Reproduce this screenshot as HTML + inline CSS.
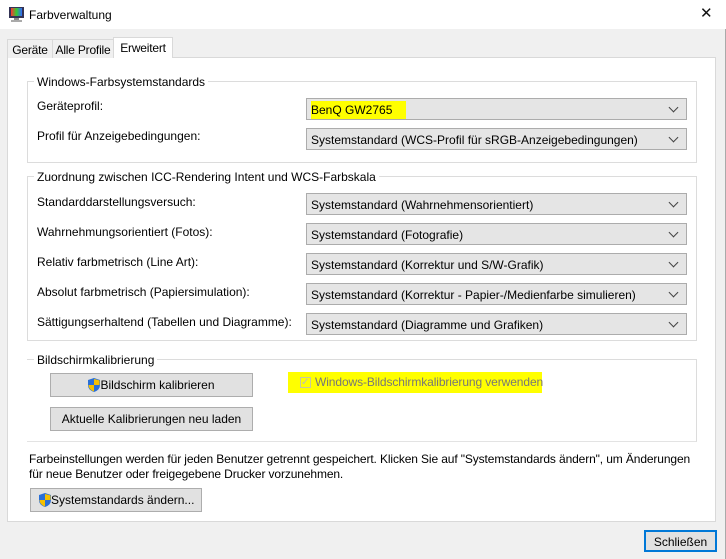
<!DOCTYPE html>
<html><head><meta charset="utf-8"><style>
*{box-sizing:border-box;margin:0;padding:0}
body{width:726px;height:559px;background:#f0f0f0;font-family:"Liberation Sans",sans-serif;font-size:12px;color:#000;position:relative;overflow:hidden}
.a{position:absolute}
.title{left:0;top:0;width:726px;height:29px;background:#fff}
.panel{left:7px;top:57px;width:709px;height:465px;background:#fff;border:1px solid #d9d9d9}
.tab{top:39px;height:19px;border:1px solid #d9d9d9;border-bottom:none;background:#f0f0f0;padding:3px 0 0;text-align:center;white-space:nowrap;letter-spacing:-0.2px}
.grp{border:1px solid #dcdcdc}
.leg{background:#fff;padding:0 3px;white-space:nowrap}
.cb{left:306px;width:381px;height:22px;background:#e5e5e5;border:1px solid #acacac;padding:4px 0 0 4px;white-space:nowrap}
.cb:after{content:"";position:absolute;right:9px;top:5px;width:6px;height:6px;border-right:1px solid #444;border-bottom:1px solid #444;transform:rotate(45deg)}
.btn{background:#e1e1e1;border:1px solid #adadad;text-align:center;padding-top:4px;white-space:nowrap}
.lbl{left:37px;white-space:nowrap}
</style></head><body>
<div class="a title"></div>
<svg class="a" style="left:8px;top:6px" width="17" height="16"><rect x="1" y="1" width="15" height="11" fill="#335" /><rect x="3" y="2" width="11" height="8" fill="url(#g)"/><defs><linearGradient id="g"><stop offset="0" stop-color="#f33"/><stop offset=".5" stop-color="#3c3"/><stop offset="1" stop-color="#36f"/></linearGradient></defs><rect x="6" y="12" width="5" height="2" fill="#888"/><rect x="3" y="14" width="11" height="2" fill="#aaa"/></svg>
<div class="a" style="left:29px;top:8px;font-size:12px">Farbverwaltung</div>
<div class="a" style="left:700px;top:4px;font-size:15px;color:#111">✕</div>
<div class="a" style="left:725px;top:29px;width:1px;height:530px;background:#aaa"></div>
<div class="a panel"></div>
<div class="a tab" style="left:7px;width:46px">Geräte</div>
<div class="a tab" style="left:52px;width:62px">Alle Profile</div>
<div class="a tab" style="left:113px;top:37px;height:21px;width:60px;background:#fff;padding-top:3px">Erweitert</div>

<div class="a grp" style="left:27px;top:81px;width:670px;height:82px"></div>
<div class="a leg" style="left:34px;top:75px">Windows-Farbsystemstandards</div>
<div class="a lbl" style="top:99px">Geräteprofil:</div>
<div class="a lbl" style="top:129px">Profil für Anzeigebedingungen:</div>
<div class="a cb" style="top:98px"><span style="background:#ffff00;padding:2px 14px 2px 0">BenQ GW2765</span></div>
<div class="a cb" style="top:128px">Systemstandard (WCS-Profil für sRGB-Anzeigebedingungen)</div>

<div class="a grp" style="left:27px;top:176px;width:670px;height:165px"></div>
<div class="a leg" style="left:34px;top:170px">Zuordnung zwischen ICC-Rendering Intent und WCS-Farbskala</div>
<div class="a lbl" style="top:195px">Standarddarstellungsversuch:</div>
<div class="a lbl" style="top:225px">Wahrnehmungsorientiert (Fotos):</div>
<div class="a lbl" style="top:255px">Relativ farbmetrisch (Line Art):</div>
<div class="a lbl" style="top:285px">Absolut farbmetrisch (Papiersimulation):</div>
<div class="a lbl" style="top:315px">Sättigungserhaltend (Tabellen und Diagramme):</div>
<div class="a cb" style="top:193px">Systemstandard (Wahrnehmensorientiert)</div>
<div class="a cb" style="top:223px">Systemstandard (Fotografie)</div>
<div class="a cb" style="top:253px">Systemstandard (Korrektur und S/W-Grafik)</div>
<div class="a cb" style="top:283px">Systemstandard (Korrektur - Papier-/Medienfarbe simulieren)</div>
<div class="a cb" style="top:313px">Systemstandard (Diagramme und Grafiken)</div>

<div class="a grp" style="left:27px;top:359px;width:670px;height:83px;border-left:none;border-bottom-color:#e3e3e3"></div>
<div class="a leg" style="left:34px;top:353px">Bildschirmkalibrierung</div>
<div class="a btn" style="left:50px;top:373px;width:203px;height:24px"><svg width="12" height="14" style="vertical-align:-3px"><path d="M6 0L12 2V7Q12 12 6 14Q0 12 0 7V2Z" fill="#2a6fd6"/><path d="M6 1V7H11.5V2.4ZM6 7H0.5Q1 12 6 13.5Z" fill="#f5c000"/></svg>Bildschirm kalibrieren</div>
<div class="a btn" style="left:50px;top:407px;width:203px;height:24px">Aktuelle Kalibrierungen neu laden</div>
<div class="a" style="left:288px;top:372px;width:254px;height:21px;background:#ffff00"></div>
<div class="a" style="left:300px;top:377px;width:11px;height:11px;border:1px solid #c8c8a0;color:#bbb;font-size:10px;line-height:10px">✓</div>
<div class="a" style="left:315px;top:375px;color:#777;letter-spacing:-0.1px">Windows-Bildschirmkalibrierung verwenden</div>

<div class="a" style="left:29px;top:452px;line-height:15px;white-space:nowrap;letter-spacing:-0.12px">Farbeinstellungen werden für jeden Benutzer getrennt gespeichert. Klicken Sie auf "Systemstandards ändern", um Änderungen<br>für neue Benutzer oder freigegebene Drucker vorzunehmen.</div>
<div class="a btn" style="left:30px;top:488px;width:172px;height:24px;padding-left:2px;text-align:left"><svg width="12" height="14" style="vertical-align:-3px;margin-left:6px"><path d="M6 0L12 2V7Q12 12 6 14Q0 12 0 7V2Z" fill="#2a6fd6"/><path d="M6 1V7H11.5V2.4ZM6 7H0.5Q1 12 6 13.5Z" fill="#f5c000"/></svg>Systemstandards ändern...</div>

<div class="a btn" style="left:644px;top:530px;width:73px;height:22px;border:2px solid #0078d7;padding-top:3px">Schließen</div>
</body></html>
